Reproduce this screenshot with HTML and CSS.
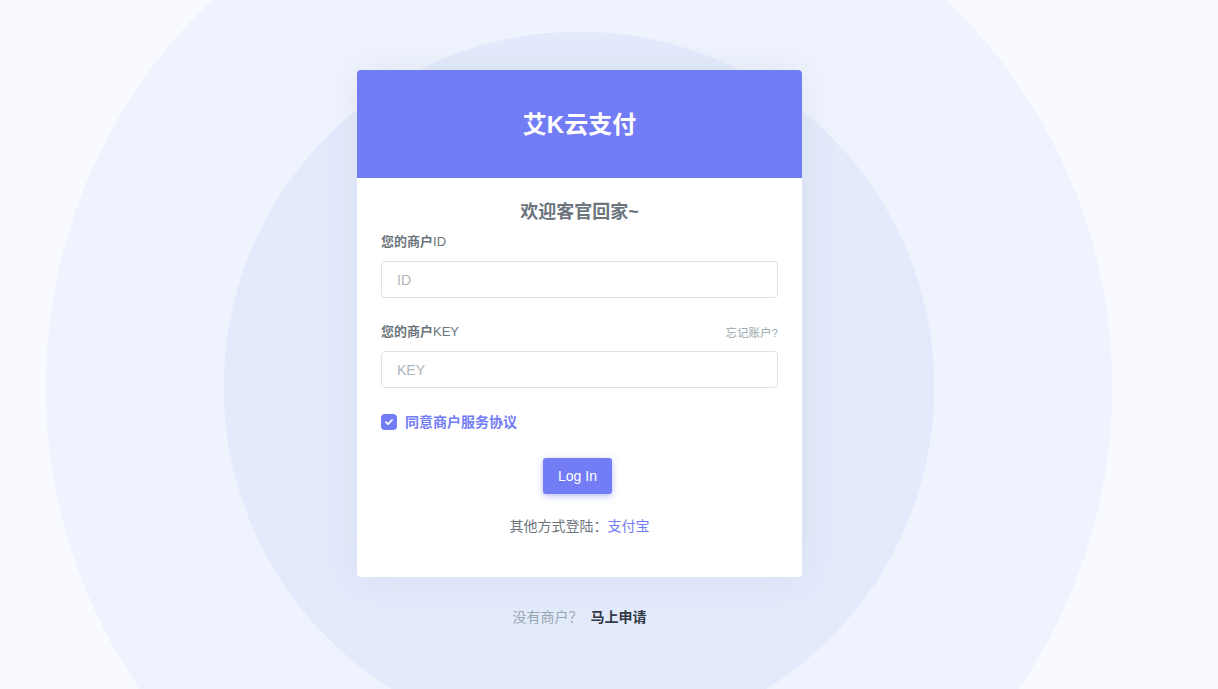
FILE: index.html
```html
<!DOCTYPE html>
<html lang="zh-CN">
<head>
    <meta charset="UTF-8">
    <meta name="viewport" content="width=device-width, initial-scale=1.0">
    <title>艾K云支付 - 商户登录</title>
    <link rel="stylesheet" href="styles.css">
</head>
<body>

    <div class="account-pages">
        <div class="card">
            <div class="card-header">
                <span class="brand">艾K云支付</span>
            </div>
            <div class="card-body">
                <h4 class="welcome">欢迎客官回家~</h4>

                <form onsubmit="return false;">
                    <div class="form-group">
                        <label class="form-label" for="pid">您的商户<span class="latin">ID</span></label>
                        <input class="form-control" type="text" id="pid" placeholder="ID">
                    </div>

                    <div class="form-group">
                        <div class="label-row">
                            <label class="form-label" for="key">您的商户<span class="latin">KEY</span></label>
                            <a href="#" class="forgot">忘记账户?</a>
                        </div>
                        <input class="form-control" type="password" id="key" placeholder="KEY">
                    </div>

                    <label class="agree">
                        <span class="check">
                            <svg width="10" height="10" viewBox="0 0 10 10"><path d="M2 5.2 L4.1 7.2 L8 3" fill="none" stroke="#fff" stroke-width="1.8" stroke-linecap="round" stroke-linejoin="round"/></svg>
                        </span>
                        同意商户服务协议
                    </label>

                    <div class="submit-row">
                        <button class="btn-primary" type="submit">Log In</button>
                    </div>

                    <div class="other-login">其他方式登陆：<a href="#">支付宝</a></div>
                </form>
            </div>
        </div>

        <p class="signup">没有商户？ <a href="#">马上申请</a></p>
    </div>

</body>
</html>
```

FILE: styles.css
```css
body {
    margin: 0;
    height: 689px;
    overflow: hidden;
    font-family: "Liberation Sans", "Noto Sans CJK SC", sans-serif;
    font-size: 14px;
    color: #6c757d;
    background: radial-gradient(circle at 579px 387px, #e2eafc 0 355px, #eef3fe 355.5px 533px, #f8faff 533.5px);
}
a {
    text-decoration: none;
}
.account-pages {
    width: 1159px;
    padding-top: 70px;
}
.card {
    width: 445px;
    margin: 0 auto;
    background: #fff;
    border-radius: 4px;
    overflow: hidden;
    box-shadow: 0 0 35px rgba(154, 161, 171, 0.15);
}
.card-header {
    box-sizing: border-box;
    height: 108px;
    padding-bottom: 3px;
    background: #727cf5;
    display: flex;
    align-items: center;
    justify-content: center;
}
.brand {
    color: #fff;
    font-size: 24px;
    font-weight: bold;
}
.card-body {
    padding: 24px 24px 41px;
}
.welcome {
    margin: 0 0 10px;
    font-size: 18px;
    line-height: 20px;
    font-weight: bold;
    text-align: center;
    color: #6c757d;
}
.form-group {
    margin-bottom: 24px;
}
.label-row {
    display: flex;
    justify-content: space-between;
    align-items: center;
}
.form-label {
    display: block;
    font-size: 13px;
    line-height: 20px;
    font-weight: 600;
    color: #6c757d;
    margin-bottom: 9px;
}
.latin {
    font-weight: normal;
}
.forgot {
    font-size: 11.5px;
    color: #98a6ad;
    margin-bottom: 9px;
}
.form-control {
    display: block;
    box-sizing: border-box;
    width: 100%;
    height: 37px;
    padding: 0 15px;
    font-family: inherit;
    font-size: 14px;
    color: #6c757d;
    border: 1px solid #dee2e6;
    border-radius: 4px;
    outline: none;
}
.form-control::placeholder {
    color: #adb5bd;
}
.agree {
    display: flex;
    align-items: center;
    gap: 8px;
    margin-top: 24px;
    font-size: 14px;
    line-height: 20px;
    font-weight: bold;
    color: #727cf5;
    cursor: pointer;
}
.check {
    width: 16px;
    height: 16px;
    border-radius: 4px;
    background: #727cf5;
    display: flex;
    align-items: center;
    justify-content: center;
}
.submit-row {
    text-align: center;
    margin-top: 26px;
    padding-right: 4px;
}
.btn-primary {
    height: 36px;
    padding: 0 15px;
    background: #727cf5;
    color: #fff;
    border: none;
    border-radius: 3px;
    font-family: inherit;
    font-size: 14px;
    cursor: pointer;
    box-shadow: 0 2px 6px rgba(114, 124, 245, 0.5);
}
.other-login {
    text-align: center;
    margin-top: 22px;
    font-size: 14px;
    line-height: 20px;
    color: #6c757d;
}
.other-login a {
    color: #727cf5;
}
.signup {
    text-align: center;
    margin: 30px 0 0;
    font-size: 14px;
    line-height: 20px;
    color: #98a6ad;
}
.signup a {
    margin-left: 4px;
    color: #313a46;
    font-weight: bold;
}
```
